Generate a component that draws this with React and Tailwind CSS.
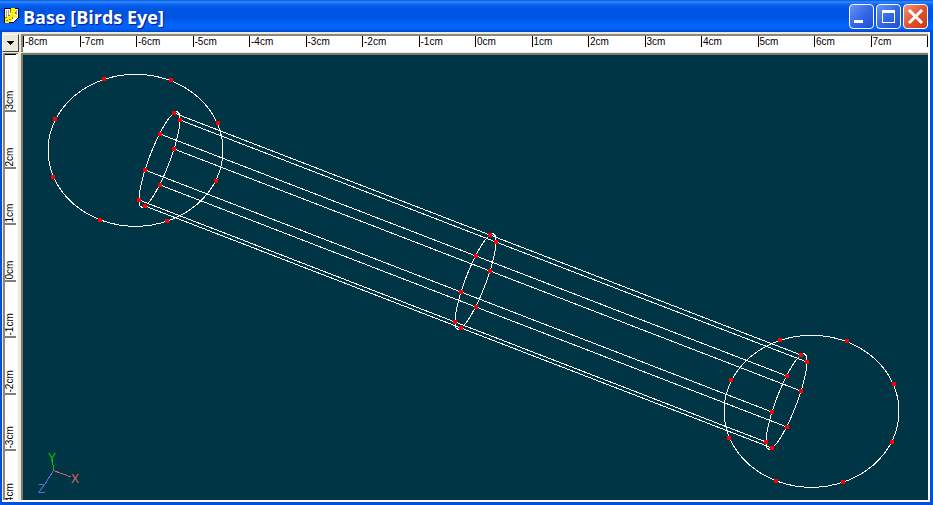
const H_LABELS = ['-8cm', '-7cm', '-6cm', '-5cm', '-4cm', '-3cm', '-2cm', '-1cm', '0cm', '1cm', '2cm', '3cm', '4cm', '5cm', '6cm', '7cm'];
const V_LABELS = ['3cm', '2cm', '1cm', '0cm', '-1cm', '-2cm', '-3cm', '-4cm'];

// Rings of the bar: eight control points each, relative to the ring's centre.
const RING = [[14, -47], [20, -40], [14, -11], [0, 25], [-15, 46], [-21, 40], [-15, 10], [0, -26]];
const RING_CENTRES = [[160, 160], [476, 282], [787, 402]];

// Spheres at the two ends of the bar.
const SPHERE = [[-32, -71], [35, -70], [82, -27], [80, 31], [31, 71], [-36, 70], [-83, 27], [-81, -31]];
const SPHERE_CENTRES = [[136, 150], [812, 411]];

function ringPath([cx, cy]) {
  const steps = 72;
  const points = [];
  for (let i = 0; i < steps; i += 1) {
    const t = (i / steps) * Math.PI * 2;
    const x = cx - 0.5 + 14.5 * Math.cos(t) + 14.5 * Math.sin(t);
    const y = cy - 0.5 - 46.5 * Math.cos(t) - 10.5 * Math.sin(t);
    points.push(`${x.toFixed(2)},${y.toFixed(2)}`);
  }
  return points.join(' ');
}

function Handles({ centre, points }) {
  return points.map(([x, y]) => (
    <rect key={`${x},${y}`} x={centre[0] + x - 2} y={centre[1] + y - 2} width="4" height="4" fill="#ff0000" />
  ));
}

function Wireframe() {
  return (
    <svg className="block h-full w-full" role="img" aria-label="Wireframe viewport" shapeRendering="crispEdges">
      <g transform="translate(-23 -55)">
        <g fill="none" stroke="#ffffff" strokeWidth="1">
          {SPHERE_CENTRES.map(([x, y]) => (
            <ellipse key={x} cx={x - 0.5} cy={y + 0.3} rx="87.5" ry="76" />
          ))}
          {RING_CENTRES.map((c) => (
            <polygon key={c[0]} points={ringPath(c)} />
          ))}
          {RING.map(([x, y]) => (
            <polyline key={`${x},${y}`} points={RING_CENTRES.map(([cx, cy]) => `${cx + x},${cy + y}`).join(' ')} />
          ))}
        </g>
        {SPHERE_CENTRES.map((c) => (
          <Handles key={c[0]} centre={c} points={SPHERE} />
        ))}
        {RING_CENTRES.map((c) => (
          <Handles key={c[0]} centre={c} points={RING} />
        ))}
        <g fill="none" strokeWidth="1">
          <path d="M53.5 470.5 L52.5 459" stroke="#00c800" />
          <path d="M53.5 470.5 L71 477" stroke="#e06464" />
          <path d="M53.5 470.5 L45 484" stroke="#5a6ed2" />
        </g>
        <g className="font-['Liberation_Sans',Arial,sans-serif] text-[12px]">
          <text x="48" y="462" fill="#00c800">Y</text>
          <text x="71" y="483" fill="#e06464">X</text>
          <text x="38" y="493" fill="#5a6ed2">Z</text>
        </g>
      </g>
    </svg>
  );
}

function AppIcon() {
  return (
    <svg className="h-4 w-4 shrink-0" viewBox="0 0 16 16" aria-hidden="true" shapeRendering="crispEdges">
      <path d="M0 0h15v10h-1v1h-1v1h-1v1h-1v1h-1v1H0z" fill="#101010" />
      <path d="M1 1h13v8l-5 5H1z" fill="#fbfbf0" />
      <path d="M2 2h1v7H2zM4 2h1v5H4zM12 2h1v5h-1z" fill="#a8a8a0" />
      <path d="M7 0h4v1h1v4h-1v1h-1v1h2v1h1v2h-2v-1H9v2H8v1H7v2H5v1H1v-5h2V9h1V8h2V6h1V5H6V1h1z" fill="#fff200" />
      <path d="M6 1h1v4H6zM4 7h2v1H4zM1 9h2v1H1zM2 12h2v1H2zM5 11h2v1H5zM8 9h1v2H8zM11 4h1v2h-1z" fill="#8c8400" />
    </svg>
  );
}

const captionBase = 'flex h-[25px] w-[25px] items-center justify-center rounded-[4px] border border-white bg-linear-to-br';

function TitleBar() {
  return (
    <header className="flex h-8 shrink-0 items-center bg-[linear-gradient(180deg,#0a52d8_0%,#2f8cff_6%,#0a62f0_14%,#0054e3_28%,#0055e5_55%,#0364fb_78%,#0262f8_90%,#0046cc_100%)] pr-[5px] pl-1">
      <AppIcon />
      <h1 className="ml-[3px] flex-1 truncate pt-[2px] font-['Open_Sans','Trebuchet_MS',sans-serif] text-[18px] leading-[30px] font-bold text-white [text-shadow:1px_1px_1px_#0a1883]">
        Base [Birds Eye]
      </h1>
      <div className="flex gap-[2px] pt-px">
        <button type="button" aria-label="Minimize" className={`${captionBase} from-[#6a94f2] via-[#3468ea] to-[#1f4fd0]`}>
          <svg className="h-[23px] w-[23px]" viewBox="0 0 23 23" aria-hidden="true">
            <path d="M4 15h9v3H4z" fill="#fff" />
          </svg>
        </button>
        <button type="button" aria-label="Maximize" className={`${captionBase} from-[#6a94f2] via-[#3468ea] to-[#1f4fd0]`}>
          <svg className="h-[23px] w-[23px]" viewBox="0 0 23 23" aria-hidden="true">
            <path d="M5 5h13v13H5zM6 8v9h11V8z" fill="#fff" fillRule="evenodd" />
          </svg>
        </button>
        <button type="button" aria-label="Close" className={`${captionBase} from-[#ec967c] via-[#e2532c] to-[#c63a12]`}>
          <svg className="h-[23px] w-[23px]" viewBox="0 0 23 23" aria-hidden="true">
            <path d="M5 5l13 13M18 5L5 18" stroke="#fff" strokeWidth="3" />
          </svg>
        </button>
      </div>
    </header>
  );
}

export default function App() {
  return (
    <main className="flex h-screen flex-col bg-[#0050e0] font-['Liberation_Sans',Arial,sans-serif] text-[10px] text-black">
      <TitleBar />
      <div className="mr-[3px] mb-[3px] ml-[2px] flex min-h-0 flex-1 flex-col border-r-2 border-b-2 border-[#fdfcf4] bg-[#ece9d8] pt-[2px]">
        <div className="flex h-[18px] shrink-0 gap-[2px]">
          <button type="button" aria-label="Ruler options" className="flex w-[17px] items-center justify-center border border-t-white border-r-[#404040] border-b-[#404040] border-l-white bg-[#ece9d8]">
            <svg className="h-[4px] w-[7px]" viewBox="0 0 7 4" aria-hidden="true" shapeRendering="crispEdges">
              <path d="M0 0h7v1H6v1H5v1H4v1H3V3H2V2H1V1H0z" fill="#000" />
            </svg>
          </button>
          <div className="min-w-0 flex-1 border-t-2 border-l-2 border-[#8a887c] bg-white">
            <div className="flex h-[11px] border-r border-black leading-[12px]">
              {H_LABELS.map((label) => (
                <span key={label} className="flex-1 border-l border-black pl-px">{label}</span>
              ))}
            </div>
          </div>
        </div>
        <div className="mt-[1px] flex min-h-0 flex-1 gap-[3px]">
          <div className="ml-px w-[15px] overflow-hidden border-t border-l-2 border-[#8a887c] bg-white">
            <div className="flex h-[453px] w-[11px] flex-col border-t border-black leading-[10px]">
              {V_LABELS.map((label) => (
                <span key={label} className="min-h-0 flex-1 rotate-180 border-t border-black pt-px [writing-mode:vertical-rl]">{label}</span>
              ))}
            </div>
          </div>
          <div className="min-w-0 flex-1 border-t-2 border-l-2 border-[#7d7b70] bg-[#003545]">
            <Wireframe />
          </div>
        </div>
      </div>
    </main>
  );
}
